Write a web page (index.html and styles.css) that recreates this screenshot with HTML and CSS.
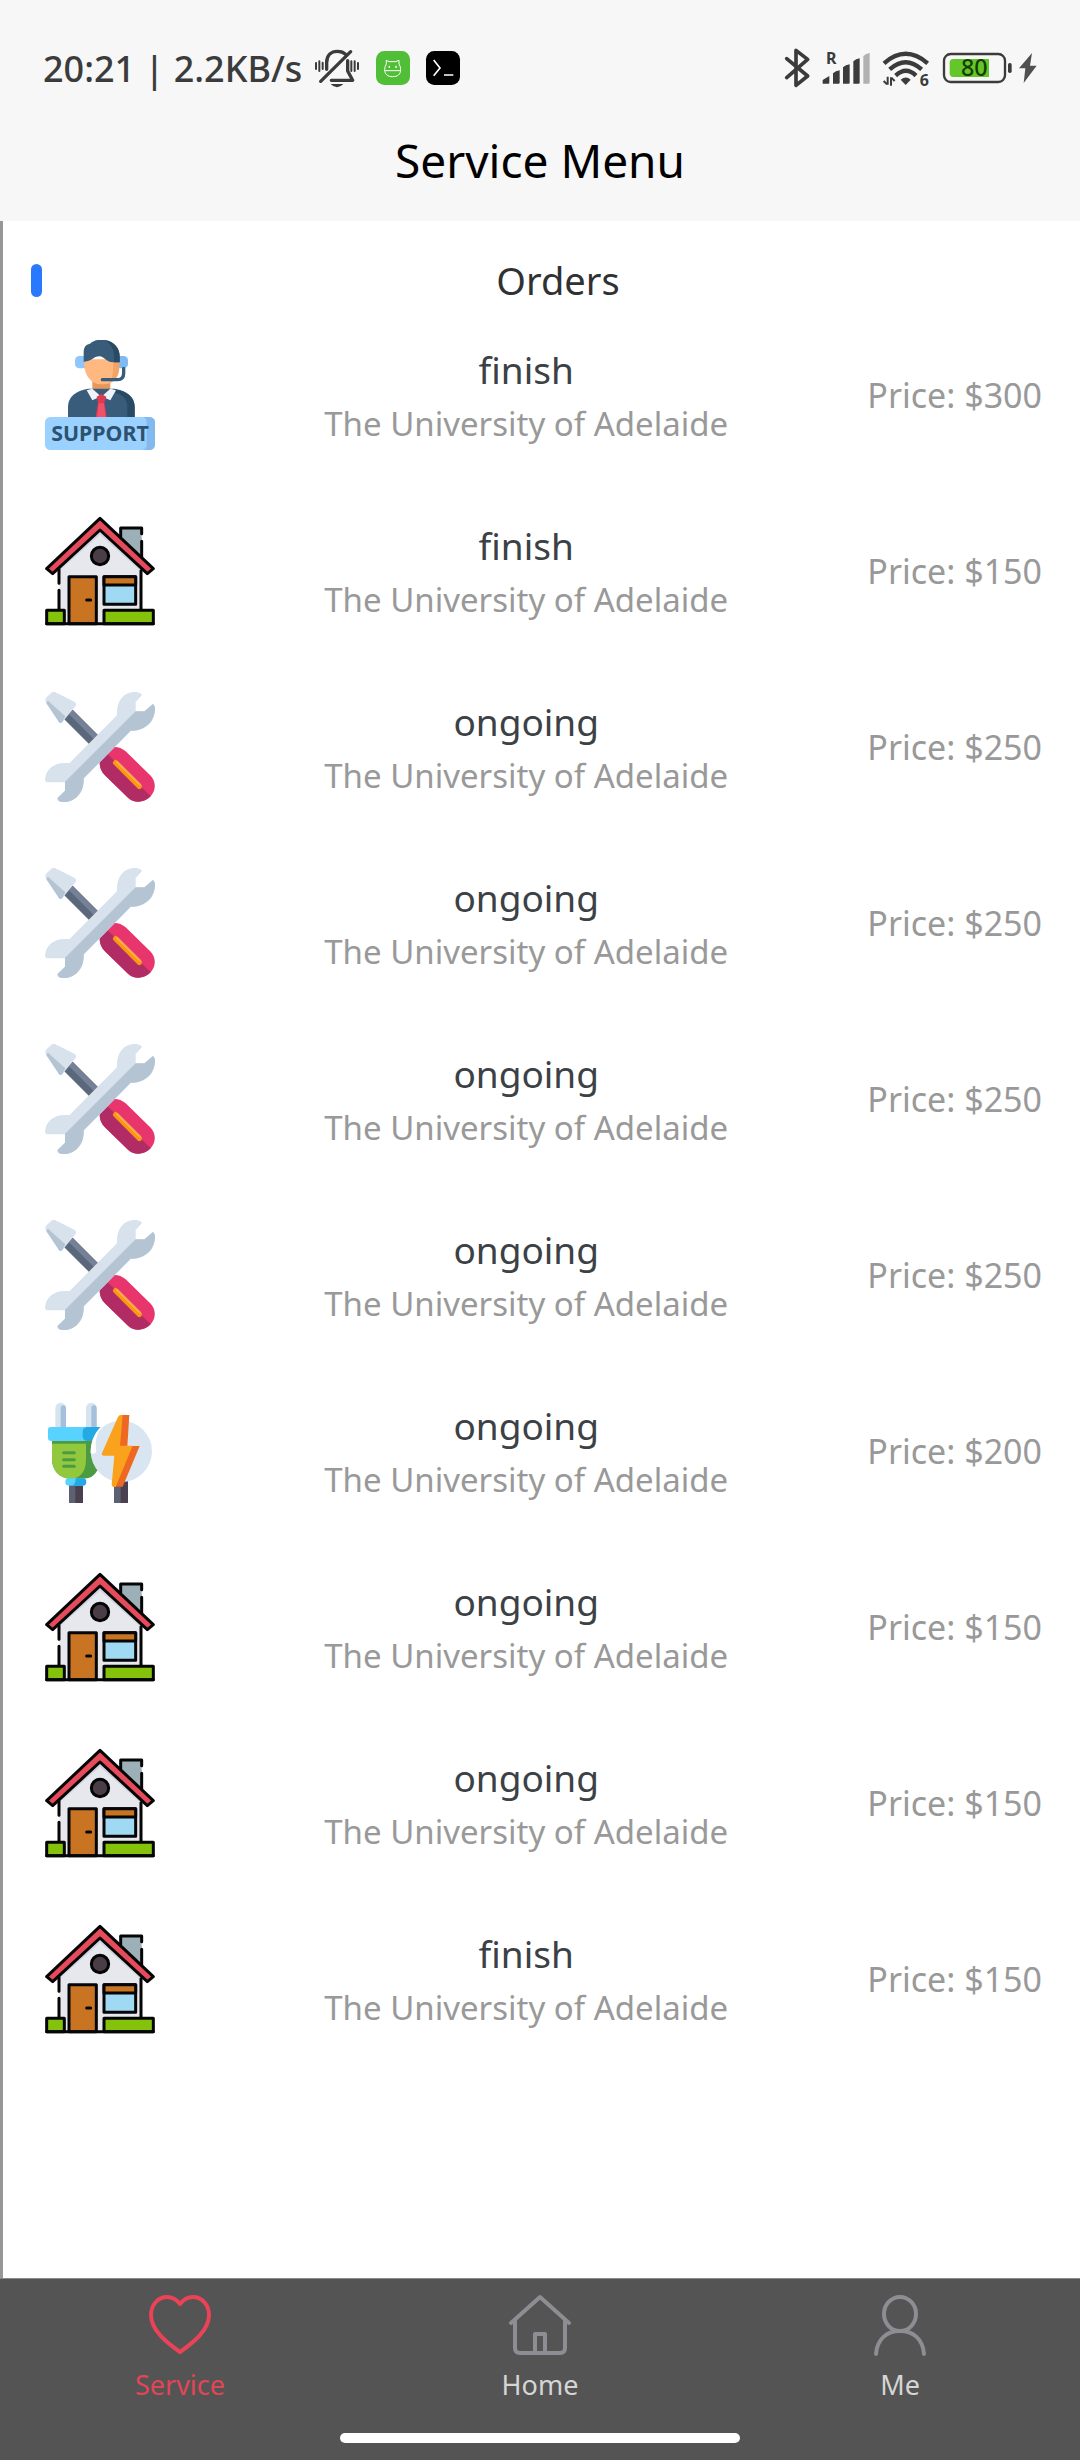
FILE: index.html
```html
<!DOCTYPE html>
<html lang="en">
<head>
<meta charset="utf-8">
<meta name="viewport" content="width=device-width, initial-scale=1">
<title>Service Menu</title>
<link rel="stylesheet" href="styles.css">
</head>
<body>
<svg class="sprite" aria-hidden="true">
  <symbol id="support" viewBox="45 60 330 330">
    <rect x="135" y="108" width="50" height="37" rx="13" fill="#8fc7fb"/>
    <rect x="245" y="108" width="49" height="37" rx="13" fill="#7fbaf3"/>
    <path d="M187 180h54v40l-27 25-27-25z" fill="#e8975a"/>
    <path d="M114 296v-36c0-30 24-48 60-54h80c36 6 60 24 60 54v36z" fill="#385c7a"/>
    <path d="M257 209c36 5 57 24 57 52v34h-22v-34c0-25-16-40-43-44z" fill="#294a63"/>
    <path d="M187 206l27 24 27-24 17 5-17 30-27-12-27 12-17-30z" fill="#edf4fc"/>
    <path d="M200 230l14-8 15 8-6 18 8 48h-35l8-48z" fill="#e03a50"/>
    <path d="M206 250h16l5 44h-26z" fill="#f0506a"/>
    <path d="M163 118h104v25c0 30-22 50-45 50h-10c-27 0-49-27-49-58z" fill="#ffb980"/>
    <path d="M250 118h18v22c0 29-15 44-27 48 6-14 9-30 9-70z" fill="#f3a364"/>
    <path d="M161 125v-28c0-14 6-25 18-25 9-9 21-13 35-13 34 0 55 22 55 50v18h-20c-22 0-25-18-41-18-18 0-25 17-47 16z" fill="#385c7a"/>
    <path d="M224 61c28 4 45 24 45 48v18h-17v-20c0-20-10-36-28-46z" fill="#294a63"/>
    <path d="M281 145v15q0 19-18 19h-46" fill="none" stroke="#385c7a" stroke-width="10" stroke-linecap="round"/>
    <rect x="45" y="291" width="330" height="99" rx="16" fill="#9bd1ff"/>
    <path d="M337 291h22a16 16 0 0 1 16 16v67a16 16 0 0 1-16 16h-24q15-2 15-16v-67q0-14-13-16z" fill="#83b9ef"/>
    <text x="210" y="362" class="sign-text" text-anchor="middle">SUPPORT</text>
  </symbol>

  <symbol id="house" viewBox="45 48 330 330">
    <path d="M272 84h63v90h-63z" fill="#9eb0b7"/>
    <path d="M88 190 210 86l123 110v132l-10 42H88z" fill="#e7e8ee"/>
    <path d="M210 90 333 200v14L210 104 88 212v-14z" fill="#d3d5dd"/>
    <g fill="none" stroke="#050505" stroke-width="9" stroke-linecap="round" stroke-linejoin="round">
      <path d="M272 110V84h63v17M335 124v50M87 208v42M87 271v60M333 212v118"/>
      <path d="M210 55 50 206l18 15L210 90l142 131 18-15z" fill="#e54b5b"/>
      <circle cx="210" cy="168" r="26" fill="#493d46"/>
      <path d="M117 230h82v141h-82z" fill="#c97423"/>
      <path d="M222 230h95v83h-95z" fill="#a0d9f3"/>
      <path d="M222 230h95v25h-95z" fill="#c97423"/>
      <path d="M50 331h53v40H50zM222 331h148v40H222z" fill="#84c20c"/>
      <path d="M50 371h320M170 300h12"/>
    </g>
  </symbol>

  <symbol id="tools" viewBox="45 36 330 330">
    <path d="M114 102l84 84" stroke="#5b687c" stroke-width="38"/>
    <path d="M122 96l84 84" stroke="#748196" stroke-width="16"/>
    <path d="M48 66q-5-7 2-14l14-14q7-5 15 0l54 27q9 6 3 14l-39 48q-7 5-11-3z" fill="#d8e2ec"/>
    <path d="M48 68 54 62 106 109 96 127q-7 6-11-3z" fill="#b5c4d3"/>
    <path d="M220 216c18-20 47-20 67-2l72 70c20 19 20 45 3 65s-50 22-68 4l-70-68c-18-18-20-49-4-69z" fill="#e8356d"/>
    <path d="M226 216 362 349c-18 19-50 22-68 4l-70-68c-19-19-20-49-4-69z" fill="#b12c64"/>
    <path d="M257 248l71 71" stroke="#ff9514" stroke-width="16" stroke-linecap="round"/>
    <path d="M261 246l69 68" stroke="#ffad4d" stroke-width="6" stroke-linecap="round"/>
    <path d="M336 45q-4-7-17-9c-35-2-60 22-58 70L118 250c-38-6-70 12-73 49q1 9 13 8h47v25l-21 20q-4 7 9 12c38 8 71-25 68-68L302 153c35 0 66-20 73-62q1-12-6-18l-26 21h-26V66z" fill="#d8e2ec"/>
    <path d="M317 94h27l24-22q7 3 7 14c0 43-34 67-73 66L161 295c3 45-30 76-67 71q-13-3-11-12l22-22v-27z" fill="#b5c4d3"/>
  </symbol>

  <symbol id="plug" viewBox="45 18 330 330">
    <path d="M76 115V54a16 16 0 0 1 32 0v61zM168 115V54a16 16 0 0 1 32 0v61z" fill="#d6e4ef"/>
    <path d="M92 115V55q0-9 8-9t8 9v60zM184 115V55q0-9 8-9t8 9v60z" fill="#a3c1dc"/>
    <path d="M117 280h42v59h-42z" fill="#4a4050"/><path d="M117 288h19v51h-19z" fill="#5b6073"/>
    <path d="M252 270h42v69h-42z" fill="#4a4050"/><path d="M252 290h20v49h-20z" fill="#5b6073"/>
    <path d="M66 145h136v96c-10 20-25 25-44 25h-38c-32 0-54-26-54-58z" fill="#4c9b43"/>
    <path d="M66 161h102v46c0 36-15 59-46 59-34 0-56-26-56-58z" fill="#91c83e"/>
    <path d="M54 119q0-8 8-8h151l-15 42H64q-10 0-10-9z" fill="#58d3ff"/>
    <path d="M158 126q0-15 16-15h39l-20 42h-19q-16 0-16-14z" fill="#23aae5"/>
    <path d="M101 188h32M101 209h32M101 229h32" stroke="#4c9b43" stroke-width="9" stroke-linecap="round"/>
    <rect x="106" y="265" width="62" height="22" rx="10" fill="#58d3ff"/>
    <path d="M137 265h21a10 10 0 0 1 0 22h-32q11-3 11-22z" fill="#23aae5"/>
    <circle cx="274" cy="184" r="92" fill="#d9e5f0"/>
    <path d="M228 104c-26 15-35 45-29 80q-5 12-17 5c0-38 13-69 46-91z" fill="#fff"/>
    <path d="M271 75h27l-6 93h37l-51 122h-28l19-96z" fill="#ef6823"/>
    <path d="M264 81q2-6 9-6h5l-8 92h38l-51 124h-6q-7-1-6-8l8-86h-32q-8-1-5-8z" fill="#faa21c"/>
  </symbol>
</svg>

<header class="top">
  <div class="status">
    <div class="status-left">
      <span>20:21 | 2.2KB/s</span>
      <svg class="bell" viewBox="42 54 138 120" role="img" aria-label="Muted">
        <g fill="none" stroke="#3b3b3b" stroke-linecap="round">
          <path stroke-width="10" d="M80 118V98c0-22 13-34 32-34 12 0 20 4 25 9M143 92v31l15 28H94M62 154l90-89" stroke-linejoin="round"/>
          <path stroke-width="6" d="M48 99v18M58 94v29M68 98v19M154 94v29M164 94v29M174 99v18"/>
        </g>
        <path d="M92 162h38q-19 20-38 0z" fill="#3b3b3b"/>
      </svg>
      <svg class="app" viewBox="225 63 102 102" role="img" aria-label="Download app">
        <rect x="225" y="63" width="102" height="102" rx="25" fill="#50be36"/>
        <path d="M256 102v-11l8 4h20l10-4v11q5 8 5 17c0 14-9 21-24 21s-24-7-24-21q0-9 5-17zM251 122h48" fill="none" stroke="#fff" stroke-width="3"/>
        <path d="M265 107v7M285 107v7" stroke="#fff" stroke-width="4"/>
      </svg>
      <svg class="app" viewBox="375 63 102 102" role="img" aria-label="Terminal app">
        <rect x="375" y="63" width="102" height="102" rx="25"/>
        <path d="M398 90 417 114 398 137M429 135h28" fill="none" stroke="#fff" stroke-width="5"/>
      </svg>
    </div>
    <div class="status-right">
      <svg class="bt" viewBox="126 54 78 120" role="img" aria-label="Bluetooth">
        <path d="M134 86l63 52-35 28V61l35 27-63 55" fill="none" stroke="#3b3b3b" stroke-width="11" stroke-linecap="round" stroke-linejoin="round"/>
      </svg>
      <svg class="signal" viewBox="243 54 144 120" role="img" aria-label="Mobile signal">
        <text x="255" y="101" class="roam">R</text>
        <path fill="#3b3b3b" d="M245 150l20-12v20q0 3-3 3h-17zM276 130q8-8 20-9v37q0 3-3 3h-17zM306 112q8-8 20-9v55q0 3-3 3h-17zM337 94q8-8 19-9v73q0 3-3 3h-16z"/>
        <path fill="#b1b1b1" d="M367 78q8-8 19-9v89q0 3-3 3h-16z"/>
      </svg>
      <svg class="wifi" viewBox="423 54 144 120" role="img" aria-label="Wi-Fi 6">
        <g fill="none" stroke="#3b3b3b" stroke-width="13">
          <path d="M429 100q65-57 131 0M446 118q48-43 96 0M464 137q31-29 61 0"/>
          <path stroke-width="6" d="M440 140v24M428 153l10 10M450 167v-25M461 153l-10-10"/>
        </g>
        <path d="M479 149q16-13 30 0l-15 16z" fill="#3b3b3b"/>
        <text x="536" y="167" class="wifi-gen">6</text>
      </svg>
      <svg class="battery" viewBox="606 54 285 120" role="img" aria-label="Battery 80 percent, charging">
        <rect x="612" y="72" width="183" height="84" rx="20" fill="none" stroke="#3b3b3b" stroke-width="7"/>
        <path d="M640 87h107v54H640q-11 0-11-11V98q0-11 11-11z" fill="#64c729"/>
        <rect x="804" y="99" width="11" height="30" rx="5" fill="#3b3b3b"/>
        <text x="703" y="138" class="level" text-anchor="middle">80</text>
        <path d="M876 69 837 115h19l-5 44 39-52h-20z" fill="#505050"/>
      </svg>
    </div>
  </div>
  <h1 class="nav-title">Service Menu</h1>
</header>

<main class="page">
  <div class="section-head"><span class="marker"></span><h2>Orders</h2></div>
  <ul class="orders">
    <li><svg class="icon" role="img" aria-label="Support"><use href="#support"/></svg><div class="info"><h3>finish</h3><p>The University of Adelaide</p></div><span class="price">Price: $300</span></li>
    <li><svg class="icon" role="img" aria-label="House"><use href="#house"/></svg><div class="info"><h3>finish</h3><p>The University of Adelaide</p></div><span class="price">Price: $150</span></li>
    <li><svg class="icon" role="img" aria-label="Repair"><use href="#tools"/></svg><div class="info"><h3>ongoing</h3><p>The University of Adelaide</p></div><span class="price">Price: $250</span></li>
    <li><svg class="icon" role="img" aria-label="Repair"><use href="#tools"/></svg><div class="info"><h3>ongoing</h3><p>The University of Adelaide</p></div><span class="price">Price: $250</span></li>
    <li><svg class="icon" role="img" aria-label="Repair"><use href="#tools"/></svg><div class="info"><h3>ongoing</h3><p>The University of Adelaide</p></div><span class="price">Price: $250</span></li>
    <li><svg class="icon" role="img" aria-label="Repair"><use href="#tools"/></svg><div class="info"><h3>ongoing</h3><p>The University of Adelaide</p></div><span class="price">Price: $250</span></li>
    <li><svg class="icon" role="img" aria-label="Electrical"><use href="#plug"/></svg><div class="info"><h3>ongoing</h3><p>The University of Adelaide</p></div><span class="price">Price: $200</span></li>
    <li><svg class="icon" role="img" aria-label="House"><use href="#house"/></svg><div class="info"><h3>ongoing</h3><p>The University of Adelaide</p></div><span class="price">Price: $150</span></li>
    <li><svg class="icon" role="img" aria-label="House"><use href="#house"/></svg><div class="info"><h3>ongoing</h3><p>The University of Adelaide</p></div><span class="price">Price: $150</span></li>
    <li><svg class="icon" role="img" aria-label="House"><use href="#house"/></svg><div class="info"><h3>finish</h3><p>The University of Adelaide</p></div><span class="price">Price: $150</span></li>
  </ul>
</main>

<footer class="bottom">
  <nav class="tabs">
    <a class="tab active" href="#service" aria-current="page">
      <svg viewBox="0 0 62 62" aria-hidden="true"><path d="M31 58C17 48 2 36 2 21 2 11 9 3 18 3c6 0 10 3 13 7 3-4 7-7 13-7 9 0 16 8 16 18 0 15-15 27-29 37z"/></svg>
      <span>Service</span>
    </a>
    <a class="tab" href="#home">
      <svg viewBox="0 0 62 62" aria-hidden="true"><path d="M2 29 31 3l29 26M6 26v28q0 5 5 5h40q5 0 5-5V26M26 59V40h10v19"/></svg>
      <span>Home</span>
    </a>
    <a class="tab" href="#me">
      <svg viewBox="0 0 62 62" aria-hidden="true"><ellipse cx="31" cy="20" rx="16" ry="17"/><path d="M7 60C8 45 18 37 31 37s23 8 24 23"/></svg>
      <span>Me</span>
    </a>
  </nav>
  <div class="home-bar"></div>
</footer>
</body>
</html>
```

FILE: styles.css
```css
* {
  box-sizing: border-box;
  margin: 0;
  padding: 0;
}

body {
  min-height: 100vh;
  display: flex;
  flex-direction: column;
  background: #fff;
  font-family: "Noto Sans", sans-serif;
}

h1, h2, h3 {
  font-weight: 400;
}

.sprite {
  display: none;
}

/* Status bar and page title */
.top {
  background: #f7f7f7;
}

.status {
  display: flex;
  justify-content: space-between;
  padding: 36px 43px 0;
  height: 100px;
  color: #3b3b3b;
  font-size: 36px;
  font-weight: 500;
  white-space: nowrap;
}

.status-left,
.status-right {
  display: flex;
  align-items: center;
}

.status-left {
  gap: 16px;
}

.status-left span {
  margin-right: -4px;
}

.status-right {
  gap: 12px;
}

.status svg {
  height: 40px;
  overflow: visible;
}

.status .bell {
  width: 46px;
}

.status .app {
  width: 34px;
  height: 34px;
}

.status .bt {
  width: 26px;
}

.status .signal,
.status .wifi {
  width: 48px;
}

.status .battery {
  width: 95px;
}

.roam,
.wifi-gen {
  font-size: 48px;
  font-weight: 700;
  fill: #3b3b3b;
}

.level {
  font-size: 70px;
  font-weight: 500;
  fill: #173d05;
}

.nav-title {
  font-size: 46px;
  line-height: 121px;
  text-align: center;
  color: #000;
}

/* Orders */
.page {
  flex: 1;
  border-left: 3px solid #979797;
  padding-top: 32px;
}

.section-head {
  display: flex;
  align-items: center;
  padding: 0 6px 0 28px;
}

.marker {
  width: 11px;
  height: 33px;
  border-radius: 6px;
  background: #2979ff;
}

.section-head h2 {
  flex: 1;
  font-size: 38px;
  line-height: 54px;
  text-align: center;
  color: #303133;
}

.orders {
  list-style: none;
}

.orders li {
  display: flex;
  justify-content: space-between;
  align-items: center;
  height: 176px;
  padding: 0 38px 0 42px;
}

.icon {
  width: 110px;
  height: 110px;
  margin-right: 30px;
}

.sign-text {
  font-size: 64px;
  font-weight: 700;
  fill: #2c5270;
}

.info {
  text-align: center;
}

.info h3 {
  font-size: 37px;
  line-height: 58px;
  color: #3b4144;
}

.info p,
.price {
  font-size: 33px;
  line-height: 50px;
  color: #999;
}

.price {
  font-size: 34px;
}

/* Tab bar */
.bottom {
  background: #545454;
  border-top: 1px solid #8a8a8a;
  padding: 15px 0 17px;
}

.tabs {
  display: flex;
}

.tab {
  flex: 1;
  display: flex;
  flex-direction: column;
  align-items: center;
  gap: 11px;
  color: #d5d5d5;
  font-size: 27px;
  line-height: 36px;
  text-decoration: none;
}

.tab svg {
  width: 62px;
  height: 62px;
  fill: none;
  stroke: #8e8d93;
  stroke-width: 4;
  stroke-linecap: round;
  stroke-linejoin: round;
}

.tab.active {
  color: #e04656;
}

.tab.active svg {
  stroke: #ec4257;
}

.home-bar {
  width: 37%;
  height: 10px;
  margin: 30px auto 0;
  border-radius: 5px;
  background: #fff;
}
```
